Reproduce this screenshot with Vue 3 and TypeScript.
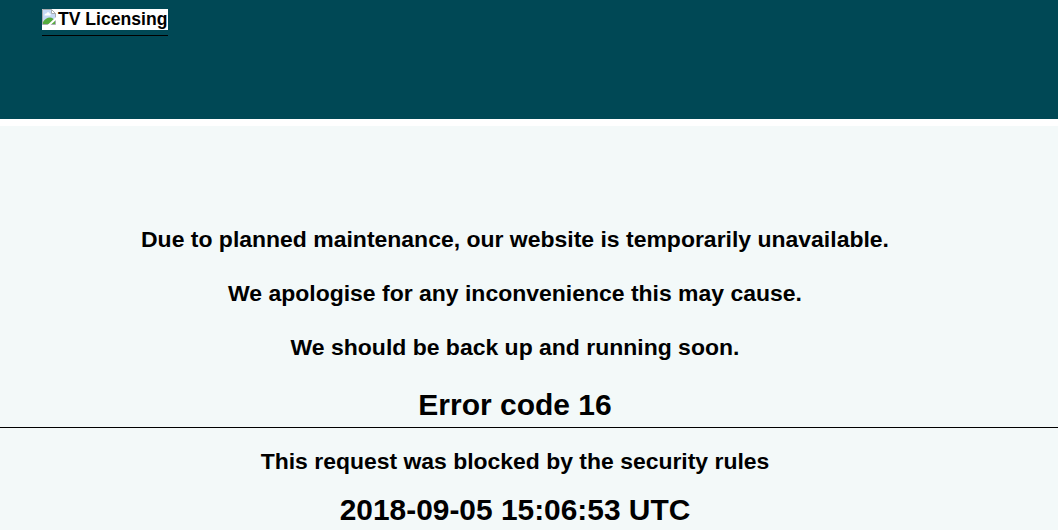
<script setup lang="ts">
const messages: string[] = [
  'Due to planned maintenance, our website is temporarily unavailable.',
  'We apologise for any inconvenience this may cause.',
  'We should be back up and running soon.',
]
</script>

<template>
  <div class="page">
    <header class="banner">
      <a class="logo">
        <span class="logo-box">
          <svg class="broken" width="16" height="16" viewBox="0 0 16 16" aria-hidden="true">
            <path d="M.5 .5H9.500L13.500 4.500V15.500H.5Z" fill="#c6d9f5" stroke="#a9adb1" />
            <path d="M2.500 6.500C2.500 4.500 4 4.500 4.500 4.500C5 2.500 7.500 3 7.500 4.500C9 4.500 9 6.500 8 6.500Z" fill="#fff" />
            <path d="M1 13C3 10 5 8.500 8 8.500C10 8.500 12 10 13 12V15H1Z" fill="#55ab3d" />
            <path d="M14 8L5.500 16H8.500L14 11Z" fill="#fff" />
            <path d="M9.500 .5V4.500H13.500Z" fill="#fff" stroke="#a9adb1" />
          </svg><span>TV Licensing</span>
        </span>
      </a>
    </header>
    <main class="content">
      <p v-for="message in messages" :key="message" class="message">{{ message }}</p>
      <h1 class="code">Error code 16</h1>
      <p class="reason">This request was blocked by the security rules</p>
      <h1 class="time">2018-09-05 15:06:53 UTC</h1>
    </main>
  </div>
</template>

<style>
body {
  margin: 0;
  overflow: hidden;
}
</style>

<style scoped>
.page {
  height: 530px;
  overflow: hidden;
  background: #f3f9f9;
  color: #000;
  font-family: 'Liberation Sans', Arial, sans-serif;
  font-weight: bold;
}
.banner {
  box-sizing: border-box;
  height: 126px;
  padding: 9px 0 0 42px;
  background: #004855;
  border-bottom: 7px solid #fff;
}
.logo {
  display: block;
  box-sizing: border-box;
  width: 126px;
  height: 27px;
  border-bottom: 1px solid #000;
}
.logo-box {
  display: flex;
  align-items: flex-start;
  height: 21px;
  background: #fff;
  font-size: 17.6px;
  line-height: 20px;
  white-space: nowrap;
}
.broken {
  flex: none;
}
.content {
  padding-top: 86px;
  text-align: center;
}
p,
h1 {
  margin: 0;
  padding-right: 28px;
}
.message {
  height: 54px;
  font-size: 22.97px;
  line-height: 54px;
}
.code {
  height: 53px;
  border-bottom: 1px solid #000;
  font-size: 30px;
  line-height: 62px;
}
.reason {
  height: 66px;
  font-size: 22.95px;
  line-height: 66px;
}
.time {
  font-size: 29.9px;
  line-height: 32px;
}
</style>
